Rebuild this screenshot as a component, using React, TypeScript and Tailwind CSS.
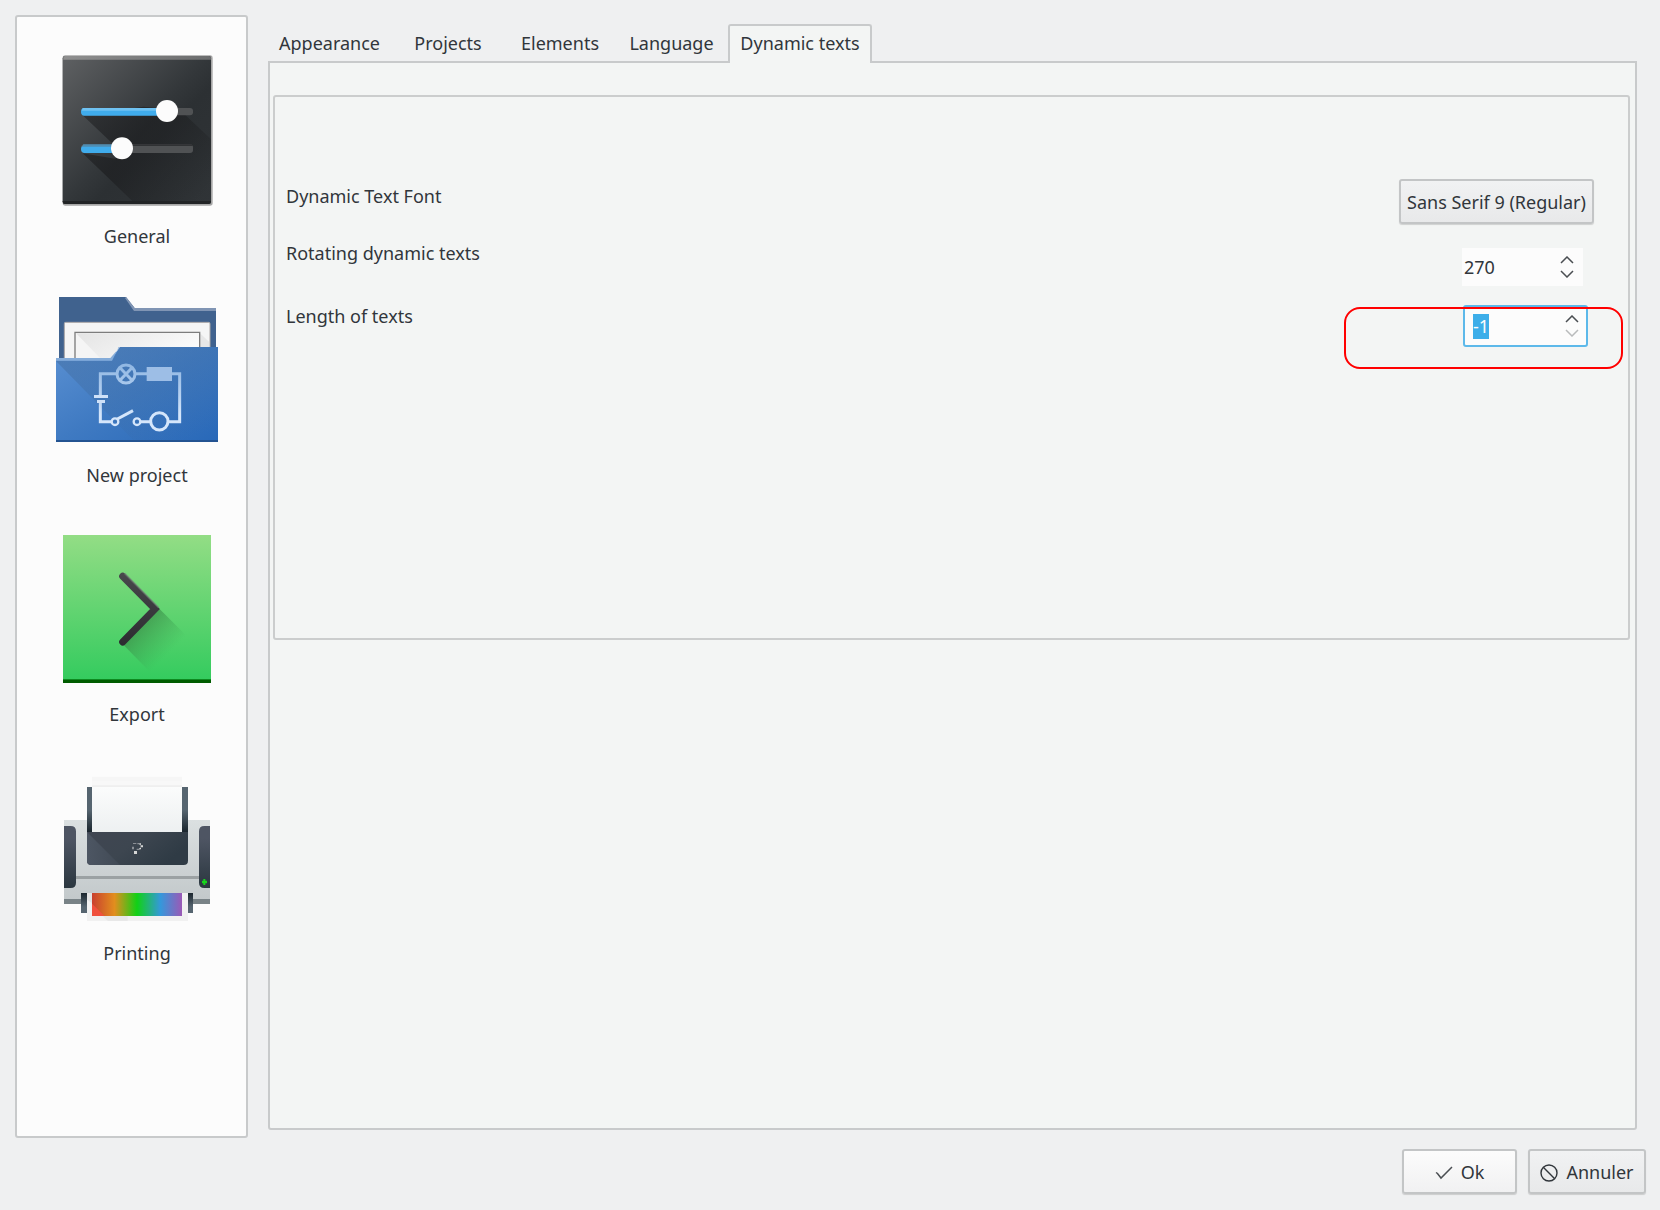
import { useEffect, useRef } from "react";
import type { ReactNode } from "react";

function GeneralIcon() {
  return (
    <svg viewBox="141 135 540 510" className="h-[170px] w-[180px]" aria-hidden="true">
      <defs>
        <linearGradient id="gBg" x1="0" y1="0" x2="1" y2="1">
          <stop offset="0" stopColor="#5f6163" />
          <stop offset="0.5" stopColor="#33373a" />
          <stop offset="0.6" stopColor="#2c3033" />
          <stop offset="1" stopColor="#303437" />
        </linearGradient>
        <linearGradient id="gShade" x1="248" y1="340" x2="580" y2="620" gradientUnits="userSpaceOnUse">
          <stop offset="0" stopColor="#1b1c1e" stopOpacity="0.5" />
          <stop offset="0.4" stopColor="#1b1c1e" stopOpacity="0.65" />
          <stop offset="1" stopColor="#1b1c1e" stopOpacity="0" />
        </linearGradient>
        <linearGradient id="gTop" x1="0" y1="0" x2="1" y2="0">
          <stop offset="0" stopColor="#8f8f8f" />
          <stop offset="1" stopColor="#6b6c6d" />
        </linearGradient>
      </defs>
      <rect x="188" y="166" width="450" height="451" rx="8" fill="#a7a7a7" />
      <rect x="188" y="168" width="445" height="444" rx="7" fill="url(#gBg)" />
      <path d="M190 179v-6q0-5 6-5h430q7 0 7 6v5z" fill="url(#gTop)" />
      <path d="M248 346 L335 428 L398 428 L345 476 L248 460 L400 606 H633 V418 L540 330 L430 320z" fill="url(#gShade)" />
      <path d="M188 603h445v2q0 7-7 7H195q-7 0-7-7z" fill="#222426" />
      <rect x="243" y="324" width="336" height="22" rx="9" fill="#505254" />
      <path d="M480 324H252q-9 0-9 11t9 12h228z" fill="#40acec" />
      <path d="M248 324h230v8H245z" fill="#6fc2f2" />
      <rect x="243" y="433" width="336" height="26" rx="9" fill="#505254" />
      <path d="M395 433h178q6 0 6 5H395z" fill="#303234" />
      <path d="M340 437H252q-9 0-9 10t9 12h88z" fill="#40acec" />
      <path d="M250 433h90v7h-95z" fill="#4f8db2" />
      <circle cx="501" cy="333" r="33" fill="#fcfcfc" />
      <circle cx="366" cy="445" r="33" fill="#fcfcfc" />
    </svg>
  );
}

function ProjectIcon() {
  return (
    <svg viewBox="21 12 540 510" className="h-[170px] w-[180px]" aria-hidden="true">
      <defs>
        <linearGradient id="pFront" x1="0" y1="0" x2="1" y2="1">
          <stop offset="0" stopColor="#5a90d2" />
          <stop offset="0.5" stopColor="#3f7ac2" />
          <stop offset="1" stopColor="#2868b8" />
        </linearGradient>
        <linearGradient id="pShade" x1="0" y1="0" x2="0.8" y2="1">
          <stop offset="0" stopColor="#3d6594" stopOpacity="0.45" />
          <stop offset="0.5" stopColor="#3d6594" stopOpacity="0.25" />
          <stop offset="1" stopColor="#3d6594" stopOpacity="0" />
        </linearGradient>
        <linearGradient id="pPaper" x1="0" y1="0" x2="1" y2="0.4">
          <stop offset="0" stopColor="#e4e4e4" />
          <stop offset="1" stopColor="#fbfbfb" />
        </linearGradient>
        <linearGradient id="pWire" x1="0" y1="250" x2="0" y2="455" gradientUnits="userSpaceOnUse">
          <stop offset="0" stopColor="#8fb6e2" />
          <stop offset="0.5" stopColor="#b9d3f2" />
          <stop offset="0.75" stopColor="#d5e6fb" />
          <stop offset="1" stopColor="#d5e6fb" />
        </linearGradient>
      </defs>
      <path d="M57 51H258L284 84H528V300H57z" fill="#40628e" />
      <path d="M258 51l26 33h244v9H282L255 54z" fill="#8095b4" />
      <rect x="73" y="127" width="437" height="150" rx="4" fill="#f5f5f5" stroke="#aaa7a6" strokeWidth="3" />
      <path d="M108 160H480V240H186z" fill="url(#pPaper)" />
      <path d="M480 160l27 25v60h-27z" fill="#e7e7e7" />
      <path d="M105 240V157H479V240" fill="none" stroke="#7d7d7d" strokeWidth="4" />
      <path d="M48 234H216L240 201H534V485H48z" fill="url(#pFront)" />
      <path d="M48 243H216L240 201H534V485H285z" fill="url(#pShade)" />
      <path d="M48 234h163l29-33h-4l-20 41H48z" fill="#85acd9" />
      <path d="M48 480h486v6H48z" fill="#235391" />
      <g fill="none" stroke="url(#pWire)" strokeWidth="9">
        <path d="M228 281H181V346M181 368V425H214M302 425H332M386 425H419V281H396M287 281H322" />
        <circle cx="258" cy="282" r="27" />
        <path d="M240 263l36 38M276 263l-36 38" />
        <circle cx="225" cy="425" r="10" strokeWidth="7" />
        <circle cx="291" cy="425" r="10" strokeWidth="7" />
        <path d="M232 417L279 392" />
        <circle cx="358" cy="424" r="26" />
      </g>
      <path d="M320 261h76v42h-76z" fill="#9dbee6" />
      <path d="M162 345h42v9h-42zM171 360h24v9h-24z" fill="#cfe1f8" />
    </svg>
  );
}

function ExportIcon() {
  return (
    <svg viewBox="21 9 540 510" className="h-[170px] w-[180px]" aria-hidden="true">
      <defs>
        <linearGradient id="eBg" x1="0" y1="0" x2="0" y2="1">
          <stop offset="0" stopColor="#93dd85" />
          <stop offset="1" stopColor="#33cb5e" />
        </linearGradient>
        <linearGradient id="eShade" x1="300" y1="315" x2="385" y2="400" gradientUnits="userSpaceOnUse">
          <stop offset="0" stopColor="#3a8d48" stopOpacity="0.7" />
          <stop offset="1" stopColor="#3a9d50" stopOpacity="0" />
        </linearGradient>
        <linearGradient id="eArrow" x1="0" y1="160" x2="0" y2="370" gradientUnits="userSpaceOnUse">
          <stop offset="0" stopColor="#48484c" />
          <stop offset="1" stopColor="#2d2c31" />
        </linearGradient>
      </defs>
      <path d="M69 45h444v440H69z" fill="url(#eBg)" />
      <path d="M358 266L440 348 332 458 250 374z" fill="url(#eShade)" />
      <path d="M248 169L345 267 248 366" fill="none" stroke="url(#eArrow)" strokeWidth="21" strokeLinecap="round" />
      <path d="M254 160L356 263" fill="none" stroke="#75807a" strokeOpacity="0.6" strokeWidth="5" />
      <path d="M69 477h444v12H69z" fill="#005c00" />
      <path d="M69 477h444v3H69z" fill="#0e8a20" />
    </svg>
  );
}

function PrinterIcon() {
  return (
    <svg viewBox="21 -9 540 510" className="h-[170px] w-[180px]" aria-hidden="true">
      <defs>
        <linearGradient id="rBody" x1="0" y1="0" x2="0" y2="1">
          <stop offset="0" stopColor="#dbe0e1" />
          <stop offset="1" stopColor="#c3c9cb" />
        </linearGradient>
        <linearGradient id="rSide" x1="0" y1="0" x2="0" y2="1">
          <stop offset="0.2" stopColor="#4e5563" />
          <stop offset="1" stopColor="#2b3740" />
        </linearGradient>
        <linearGradient id="rPost" x1="0" y1="0" x2="0" y2="1">
          <stop offset="0.5" stopColor="#566570" />
          <stop offset="1" stopColor="#17222a" />
        </linearGradient>
        <linearGradient id="rPaper" x1="0" y1="0" x2="0" y2="1">
          <stop offset="0" stopColor="#fbfcfc" />
          <stop offset="1" stopColor="#edf0f1" />
        </linearGradient>
        <linearGradient id="rTray" x1="0" y1="0" x2="1" y2="0.4">
          <stop offset="0" stopColor="#404652" />
          <stop offset="0.5" stopColor="#3d4650" />
          <stop offset="1" stopColor="#2f3b45" />
        </linearGradient>
        <linearGradient id="rFlap" x1="141" y1="0" x2="240" y2="0" gradientUnits="userSpaceOnUse">
          <stop offset="0" stopColor="#4d5663" />
          <stop offset="1" stopColor="#414a55" />
        </linearGradient>
        <linearGradient id="rFoot" x1="0" y1="0" x2="0" y2="1">
          <stop offset="0" stopColor="#1b262e" />
          <stop offset="0.7" stopColor="#566570" />
        </linearGradient>
        <linearGradient id="rRainbow" x1="0" y1="0" x2="1" y2="0">
          <stop offset="0" stopColor="#c9402f" />
          <stop offset="0.25" stopColor="#e28e1e" />
          <stop offset="0.5" stopColor="#11d116" />
          <stop offset="0.76" stopColor="#3498db" />
          <stop offset="1" stopColor="#9b59b6" />
        </linearGradient>
      </defs>
      <path d="M72 165h438v238H72z" fill="url(#rBody)" />
      <path d="M72 402h66v15H72zM444 402h66v15h-66z" fill="#798387" />
      <path d="M72 183h20q16 0 16 16v154q0 16-16 16H72zM510 183h-17q-16 0-16 16v154q0 16 16 16h17z" fill="url(#rSide)" />
      <path d="M108 333h369v9H108z" fill="#9ba1a3" />
      <path d="M141 66h18v138h-18zM426 66h18v138h-18z" fill="url(#rPost)" />
      <path d="M156 35h270v13H156z" fill="#f6f6f6" />
      <path d="M156 48h270v18H156z" fill="#f8f8f8" />
      <path d="M156 61h270v5H156z" fill="#efefef" />
      <path d="M156 66h270v136H156z" fill="url(#rPaper)" />
      <path d="M141 201h303v86q0 13-13 13H154q-13 0-13-13z" fill="url(#rTray)" />
      <path d="M141 201l99 99h-86q-13 0-13-13z" fill="url(#rFlap)" />
      <path d="M279 234h10v3h-10zM276 245h6v8h-6zM292 234h6v4h-6zM290 251h9v4h-9z" fill="#8b9096" />
      <path d="M282 258h9v9h-9zM298 235h5v6h6v6h-6v6h-5v-4h4v-10h-4z" fill="#d5d6d5" />
      <path d="M490 342h6v5h5v8h-5v5h-6v-5h-4v-8h4z" fill="#17d51b" />
      <path d="M123 384h18v60h-18zM441 384h18v60h-18z" fill="url(#rFoot)" />
      <path d="M141 384h303v84H141z" fill="#f1f1f1" />
      <path d="M188 453h75v15h-59z" fill="#e8e8e8" />
      <path d="M156 384h270v69H156z" fill="url(#rRainbow)" />
      <path d="M156 416l38 37h-38z" fill="#f0503d" />
      <path d="M141 384h15v30l-15-10z" fill="#e3e3e3" />
    </svg>
  );
}

const pages = [
  { label: "General", icon: <GeneralIcon /> },
  { label: "New project", icon: <ProjectIcon /> },
  { label: "Export", icon: <ExportIcon /> },
  { label: "Printing", icon: <PrinterIcon /> },
];

const tabs = [
  { label: "Appearance", width: "w-[123px]" },
  { label: "Projects", width: "w-[114px]" },
  { label: "Elements", width: "w-[110px]" },
  { label: "Language", width: "w-[113px]" },
];

function Chevron({ up, dim }: { up?: boolean; dim?: boolean }) {
  return (
    <svg viewBox="0 0 14 8" className="h-2 w-3.5" fill="none" stroke={dim ? "#b9bbbc" : "#4a4e52"} strokeWidth="1.5" aria-hidden="true">
      <path d={up ? "M1 7L7 1L13 7" : "M1 1L7 7L13 1"} />
    </svg>
  );
}

function StepButtons({ dimDown }: { dimDown?: boolean }) {
  return (
    <span className="flex flex-col gap-1.5 pb-px">
      <button type="button" aria-label="Increase"><Chevron up /></button>
      <button type="button" aria-label="Decrease"><Chevron dim={dimDown} /></button>
    </span>
  );
}

function DialogButton({ id, className, children }: { id?: string; className: string; children: ReactNode }) {
  return (
    <button
      id={id}
      type="button"
      className={`flex h-[45px] items-center justify-center gap-2 rounded-[3px] border-2 border-[#c3c5c6] pt-0.5 whitespace-nowrap shadow-[0_1px_1px_rgba(0,0,0,0.15)] ${className}`}
    >
      {children}
    </button>
  );
}

export default function App() {
  const lengthRef = useRef<HTMLInputElement>(null);

  useEffect(() => {
    lengthRef.current?.focus();
    lengthRef.current?.select();
  }, []);

  return (
    <div className="flex min-h-screen flex-col bg-[#eff0f1] pt-[15px] pr-[14px] pb-4 pl-[15px] font-['Noto_Sans',sans-serif] text-[18px] leading-[25px] text-[#31363b]">
      <div className="flex flex-1 gap-5">
        <nav className="w-[233px] shrink-0 rounded-[3px] border-2 border-[#c8cacb] bg-[#fcfcfc] pt-7 pl-[30px]">
          <ul className="flex flex-col gap-11">
            {pages.map((page) => (
              <li key={page.label}>
                <button type="button" className="flex w-[180px] flex-col items-center">
                  {page.icon}
                  <span className="mt-[9px] mb-[-9px]">{page.label}</span>
                </button>
              </li>
            ))}
          </ul>
        </nav>

        <main className="mr-[9px] mb-2 flex min-w-0 flex-1 flex-col pt-[9px]">
          <div role="tablist" className="z-10 mb-[-2px] flex h-[39px]">
            {tabs.map((tab) => (
              <button key={tab.label} type="button" role="tab" aria-selected="false" className={`text-center ${tab.width}`}>
                {tab.label}
              </button>
            ))}
            <button type="button" role="tab" aria-selected="true" className="w-36 rounded-t-[3px] border-2 border-b-0 border-[#c8cacb] bg-[#f3f5f4] pb-0.5 text-center">
              Dynamic texts
            </button>
          </div>
          <section className="flex-1 rounded-b-[3px] border-2 border-[#c8cacb] bg-[#f3f5f4] pt-8 pr-[5px] pl-[3px]">
            <div className="min-h-[545px] rounded-[3px] border-2 border-[#cbcdcd] pt-[82px]">
              <div className="flex items-start justify-between pr-[34px] pl-[11px]">
                <label htmlFor="font" className="pt-[5px]">Dynamic Text Font</label>
                <DialogButton id="font" className="w-[195px] bg-linear-to-b from-[#f1f2f3] to-[#e8e9ea]">
                  Sans Serif 9 (Regular)
                </DialogButton>
              </div>
              <div className="mt-[17px] flex items-start justify-between pr-[45px] pl-[11px]">
                <label htmlFor="rotation">Rotating dynamic texts</label>
                <div className="mt-[7px] flex h-[38px] w-[121px] items-center justify-between bg-[#fcfcfc] pr-[9px] pl-0.5">
                  <input id="rotation" type="text" inputMode="numeric" defaultValue="270" className="w-16 bg-transparent outline-none" />
                  <StepButtons />
                </div>
              </div>
              <div className="relative mt-[18px] flex items-start justify-between pr-10 pl-[11px]">
                <label htmlFor="length">Length of texts</label>
                <div className="mt-px flex h-[42px] w-[125px] items-center justify-between rounded-[3px] border-2 border-[#5db9ea] bg-[#fcfcfc] pr-[7px] pl-2">
                  <input
                    ref={lengthRef}
                    id="length"
                    type="text"
                    inputMode="numeric"
                    defaultValue="-1"
                    className="w-16 bg-transparent outline-none selection:bg-[#3daee9] selection:text-[#fcfcfc]"
                  />
                  <StepButtons dimDown />
                </div>
                <div className="pointer-events-none absolute top-[3px] right-[5px] h-[62px] w-[279px] rounded-[16px] border-2 border-[#ff0000]" />
              </div>
            </div>
          </section>
        </main>
      </div>

      <footer className="mt-[11px] flex justify-end gap-[11px]">
        <DialogButton className="w-[115px] bg-linear-to-b from-[#fcfcfc] to-[#f1f1f2]">
          <svg viewBox="0 0 18 18" className="size-[18px]" fill="none" stroke="#4a4e52" strokeWidth="1.5" aria-hidden="true">
            <path d="M1 8.5L2.5 9.5L6 14L17 3" />
          </svg>
          Ok
        </DialogButton>
        <DialogButton className="w-[118px] bg-linear-to-b from-[#f1f2f3] to-[#e8e9ea]">
          <svg viewBox="0 0 18 18" className="size-[18px]" fill="none" stroke="#31363b" strokeWidth="1.4" aria-hidden="true">
            <circle cx="9" cy="9" r="8" />
            <path d="M3.3 3.3L14.7 14.7" />
          </svg>
          Annuler
        </DialogButton>
      </footer>
    </div>
  );
}
